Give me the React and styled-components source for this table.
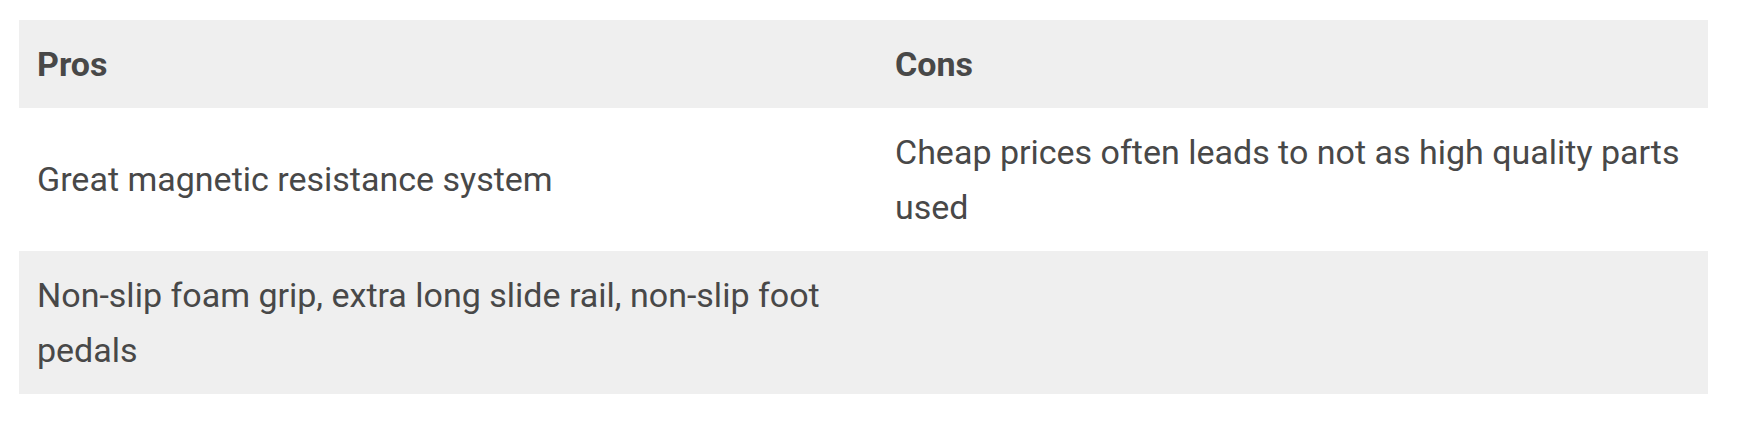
import React from 'react';
import styled, { createGlobalStyle } from 'styled-components';

const GlobalStyle = createGlobalStyle`
  body {
    margin: 0;
    background: #fff;
    font-family: Roboto, "Liberation Sans", sans-serif;
  }
`;

const Page = styled.div`
  padding: 20px 44px 0 19px;
`;

const Table = styled.table`
  width: 100%;
  border-collapse: collapse;
  border-spacing: 0;
  font-size: 34px;
  line-height: 55px;
  color: #484848;
`;

const Row = styled.tr`
  background: ${(p) => (p.$shaded ? '#efefef' : '#fff')};
`;

const HeadCell = styled.th`
  width: ${(p) => p.$width};
  padding: 16.5px 18px;
  text-align: left;
  font-weight: 700;
  vertical-align: middle;
`;

const Cell = styled.td`
  padding: 16.5px 18px;
  vertical-align: middle;
`;

// rows of the comparison table
const rows = [
  ['Great magnetic resistance system', 'Cheap prices often leads to not as high quality parts used'],
  ['Non-slip foam grip, extra long slide rail, non-slip foot pedals', ''],
];

const App = () => (
  <>
    <GlobalStyle />
    <Page>
      <Table>
        <thead>
          <Row $shaded>
            <HeadCell $width="50.8%">Pros</HeadCell>
            <HeadCell $width="49.2%">Cons</HeadCell>
          </Row>
        </thead>
        <tbody>
          {rows.map((r, i) => (
            <Row key={i} $shaded={i % 2 === 1}>
              <Cell>{r[0]}</Cell>
              <Cell>{r[1]}</Cell>
            </Row>
          ))}
        </tbody>
      </Table>
    </Page>
  </>
);

export default App;
